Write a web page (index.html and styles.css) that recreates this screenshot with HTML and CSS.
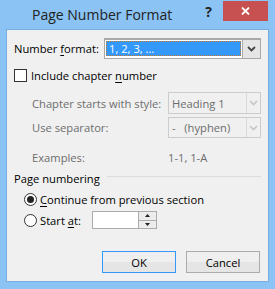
FILE: index.html
```html
<!DOCTYPE html>
<html lang="en">
<head>
<meta charset="UTF-8" />
<title>Page Number Format</title>
<link rel="stylesheet" href="styles.css">
</head>
<body>
  <div class="window">
    <div class="titlebar">
      <span class="title">Page Number Format</span>
      <span class="help">?</span>
      <span class="close">
        <svg width="9" height="8" viewBox="0 0 9 8"><path d="M1 0.5 L8 7.5 M8 0.5 L1 7.5" stroke="#fff" stroke-width="1.8" fill="none"/></svg>
      </span>
    </div>

    <div class="client">
      <div class="row format-row">
        <span>Number <u>f</u>ormat:</span>
        <div class="combo combo-wide">
          <span class="combo-text"><span class="selected">1, 2, 3, …</span></span>
          <span class="drop"><svg width="9" height="6" viewBox="0 0 9 6"><path d="M1 1 L4.5 4.5 L8 1" stroke="#444" stroke-width="1.8" fill="none"/></svg></span>
        </div>
      </div>

      <div class="row check-row">
        <span class="checkbox"></span>
        <span>Include chapter <u>n</u>umber</span>
      </div>

      <div class="sub">
        <span>Chapter starts with style:</span>
        <div class="combo disabled combo-tall">
          <span class="combo-text">Heading 1</span>
          <span class="drop"><svg width="9" height="6" viewBox="0 0 9 6"><path d="M1 1 L4.5 4.5 L8 1" stroke="#c6c6c6" stroke-width="1.6" fill="none"/></svg></span>
        </div>
      </div>
      <div class="sub sep-row">
        <span>Use separator:</span>
        <div class="combo disabled">
          <span class="combo-text">-&nbsp;&nbsp;&nbsp;(hyphen)</span>
          <span class="drop"><svg width="9" height="6" viewBox="0 0 9 6"><path d="M1 1 L4.5 4.5 L8 1" stroke="#c6c6c6" stroke-width="1.6" fill="none"/></svg></span>
        </div>
      </div>
      <div class="sub examples-row">
        <span>Examples:</span>
        <span>1-1, 1-A</span>
      </div>

      <div class="group">
        <span>Page numbering</span>
        <span class="group-line"></span>
      </div>

      <div class="row radio-row">
        <span class="radio checked"></span>
        <span class="radio-label"><u>C</u>ontinue from previous section</span>
      </div>
      <div class="row radio-row start-row">
        <span class="radio"></span>
        <span class="radio-label start-label">Start <u>a</u>t:</span>
        <div class="spinner">
          <span class="spin-field"></span>
          <span class="spin-buttons">
            <span class="spin-btn"><svg width="5" height="3" viewBox="0 0 5 3"><path d="M0 3 L2.5 0 L5 3Z" fill="#222"/></svg></span>
            <span class="spin-btn"><svg width="5" height="3" viewBox="0 0 5 3"><path d="M0 0 L2.5 3 L5 0Z" fill="#222"/></svg></span>
          </span>
        </div>
      </div>

      <div class="buttons">
        <span class="button default">OK</span>
        <span class="button">Cancel</span>
      </div>
    </div>
  </div>
</body>
</html>
```

FILE: styles.css
```css
* { box-sizing: border-box; margin: 0; padding: 0; }
body {
  font-family: 'Open Sans', 'Noto Sans', sans-serif;
  font-size: 11.2px;
  color: #000;
  background: #fff;
  white-space: nowrap;
}
u { text-decoration: underline; text-underline-offset: 2px; }

/* Window frame */
.window {
  width: 275px; height: 289px;
  background: #8ac3f4;
  display: flex; flex-direction: column;
}
.titlebar {
  height: 29px;
  display: flex; align-items: flex-start;
}
.title {
  font-size: 14px; color: #222;
  margin: 5px 0 0 32px;
}
.help {
  margin: 2px 0 0 auto;
  font-weight: bold; font-size: 14px; color: #222;
}
.close {
  width: 45px; height: 20px;
  margin: 1px 7px 0 11px;
  background: #c75050;
  display: flex; align-items: center; justify-content: center;
}

/* Client area */
.client {
  flex: 1;
  margin: 0 6px 7px 6px;
  border: 1px solid #78ade0;
  background: #f0f0f0;
  padding: 0 7px 8px 7px;
  display: flex; flex-direction: column;
}
.row { display: flex; align-items: center; }

.format-row { margin-top: 8px; height: 21px; }
.combo {
  display: flex; height: 21px;
  border: 1px solid #acacac;
  background: #fff;
}
.combo-wide { width: 157px; margin-left: auto; border-width: 2px 1px 1px 1px; border-color: #a9a9a9; }
.combo-text {
  flex: 1; display: flex; align-items: center;
  padding: 0 4px;
}
.combo-wide .combo-text { padding: 1px 1px 2px 1px; }
.selected {
  flex: 1; height: 100%;
  background: #3399ff; color: #fff;
  border: 1px dotted #c9792a;
  padding-left: 2px;
  display: flex; align-items: center;
}
.drop {
  width: 18px;
  border-left: 1px solid #acacac;
  background: #e5e5e5;
  display: flex; align-items: center; justify-content: center;
}

.check-row { margin-top: 10px; height: 13px; }
.checkbox {
  width: 13px; height: 13px;
  border: 1px solid #333;
  background: #fff;
  margin-right: 4px;
}

/* Disabled chapter options */
.sub {
  display: grid;
  grid-template-columns: 136px 93px;
  align-items: center;
  padding-left: 18px;
  color: #6d6d6d;
  margin-top: 10px;
}
.sep-row { margin-top: 3px; }
.examples-row { margin-top: 11px; height: 16px; }
.combo.disabled {
  border-color: #cccccc;
  background: #f0f0f0;
  color: #6d6d6d;
}
.combo-tall { height: 22px; }
.combo.disabled .combo-text { padding-left: 3px; }
.combo.disabled .drop {
  width: 14px;
  border-left-color: #d9d9d9;
  background: #f0f0f0;
}

/* Group */
.group {
  margin-top: 5px; height: 16px;
  display: flex; align-items: center;
}
.group-line {
  flex: 1; height: 1px;
  background: #dcdcdc;
  margin: -3px 0 0 7px;
}

.radio-row { padding-left: 10px; margin-top: 6px; height: 14px; }
.start-row { margin-top: 5px; height: 18px; }
.radio {
  width: 13px; height: 13px;
  border: 1px solid #333;
  border-radius: 50%;
  background: #fff;
  display: flex; align-items: center; justify-content: center;
}
.radio.checked::after {
  content: ""; width: 7px; height: 7px;
  border-radius: 50%;
  background: #222;
}
.radio-label { margin-left: 3px; }
.start-label { width: 52px; }

.spinner {
  width: 65px; height: 18px;
  border: 1px solid #acacac;
  background: #fff;
  display: flex;
}
.spin-field { flex: 1; }
.spin-buttons {
  width: 18px;
  display: flex; flex-direction: column;
  border-left: 1px solid #acacac;
}
.spin-btn {
  flex: 1;
  background: #ececec;
  display: flex; align-items: center; justify-content: center;
}
.spin-btn + .spin-btn { border-top: 1px solid #acacac; }

/* Buttons */
.buttons {
  margin-top: auto;
  display: flex; justify-content: flex-end; gap: 10px;
  padding-right: 1px;
}
.button {
  width: 74px; height: 22px;
  border: 1px solid #acacac;
  background: linear-gradient(#efefef 50%, #e5e5e5 50%);
  display: flex; align-items: center; justify-content: center;
}
.button.default { border-color: #3399ff; }
```
